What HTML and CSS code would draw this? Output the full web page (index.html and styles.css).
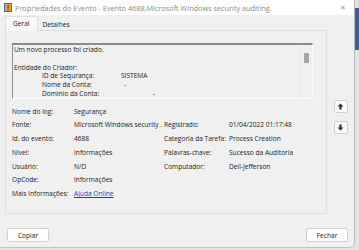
FILE: index.html
```html
<!DOCTYPE html>
<html lang="pt-BR">
<head>
  <meta charset="UTF-8" />
  <title>Propriedades do Evento</title>
  <link rel="stylesheet" href="styles.css">
</head>
<body>
  <div class="window">
    <div class="titlebar">
      <svg class="app-icon" width="8" height="9" viewBox="0 0 8 9">
        <rect x="0" y="0" width="8" height="9" fill="#3c6eb4"/>
        <rect x="1" y="1" width="6" height="7" fill="#e8a33a"/>
        <rect x="3.5" y="2" width="1.2" height="3.5" fill="#7a3b10"/>
        <rect x="3.5" y="6.2" width="1.2" height="1.2" fill="#7a3b10"/>
      </svg>
      <span class="title">Propriedades do Evento - Evento 4688,Microsoft Windows security auditing.</span>
      <span class="close">&#x2715;</span>
    </div>

    <div class="body">
      <div class="main">
        <div class="tabs">
          <div class="tab active">Geral</div>
          <div class="tab">Detalhes</div>
        </div>
        <div class="panel">
          <div class="desc">
            <div class="desc-text">
              <div>Um novo processo foi criado.</div>
              <div>&nbsp;</div>
              <div>Entidade do Criador:</div>
              <div class="kv"><span class="k">ID de Sequrança:</span><span>SISTEMA</span></div>
              <div class="kv"><span class="k">Nome da Conta:</span><span class="dash">-</span></div>
              <div class="kv"><span class="k">Domínio da Conta:</span><span class="dash2">-</span></div>
            </div>
            <div class="scroll"><div class="thumb"></div></div>
          </div>

          <div class="fields">
            <span>Nome do log:</span><span>Segurança</span><span></span><span></span>
            <span>Fonte:</span><span>Microsoft Windows security .</span><span>Registrado:</span><span>01/04/2022 01:17:48</span>
            <span>Id. do evento:</span><span>4688</span><span>Categoria da Tarefa:</span><span>Process Creation</span>
            <span>Nível:</span><span>Informações</span><span>Palavras-chave:</span><span>Sucesso da Auditoria</span>
            <span>Usuário:</span><span>N/D</span><span>Computador:</span><span>Dell-Jefferson</span>
            <span>OpCode:</span><span>Informações</span><span></span><span></span>
            <span>Mais Informações:</span><span><a href="#" class="link">Ajuda Online</a></span><span></span><span></span>
          </div>
        </div>
      </div>

      <div class="side">
        <button class="arrow">
          <svg width="7" height="7" viewBox="0 0 7 7"><path d="M3.5 0.5 L6.5 3.5 L4.6 3.5 L4.6 6.5 L2.4 6.5 L2.4 3.5 L0.5 3.5 Z" fill="#333"/></svg>
        </button>
        <button class="arrow">
          <svg width="7" height="7" viewBox="0 0 7 7"><path d="M3.5 6.5 L6.5 3.5 L4.6 3.5 L4.6 0.5 L2.4 0.5 L2.4 3.5 L0.5 3.5 Z" fill="#333"/></svg>
        </button>
      </div>
    </div>

    <div class="footer">
      <button class="btn">Copiar</button>
      <button class="btn">Fechar</button>
    </div>
  </div>
  <div class="edge"></div>
</body>
</html>
```

FILE: styles.css
```css
html, body {
  margin: 0;
  padding: 0;
  height: 250px;
  overflow: hidden;
  background: #e3e3e3;
}

body {
  font-family: 'Open Sans', 'Noto Sans', sans-serif;
  font-size: 6.6px;
  color: #1a1a1a;
  display: flex;
}

.window {
  width: 355px;
  height: 248px;
  background: #f0f0f0;
  border-right: 1px solid #b9b9b9;
  border-bottom: 1px solid #c4c4c4;
  border-bottom-right-radius: 5px;
  display: flex;
  flex-direction: column;
  box-sizing: border-box;
}

.edge {
  width: 4px;
  height: 42px;
  margin-top: 8px;
  background: #3d6196;
}

.titlebar {
  height: 16px;
  background: #fff;
  display: flex;
  align-items: center;
  padding-left: 4px;
  color: #8a8a8a;
  font-size: 7.3px;
}

.app-icon {
  margin-right: 3px;
}

.title {
  flex: 1;
  white-space: nowrap;
}

.close {
  color: #9a9a9a;
  font-size: 7px;
  margin-right: 8px;
}

.body {
  display: flex;
  flex: 1;
}

.main {
  width: 322px;
  margin-left: 5px;
  display: flex;
  flex-direction: column;
}

.tabs {
  display: flex;
  height: 14px;
  align-items: flex-end;
  margin-top: 1px;
}

.tab {
  height: 11px;
  line-height: 11px;
  padding: 0 5px;
  color: #222;
}

.tab.active {
  height: 14px;
  line-height: 14px;
  background: #f9f9f9;
  border: 1px solid #dedede;
  border-bottom: none;
  padding: 0 7px;
  margin-bottom: -1px;
  position: relative;
  z-index: 1;
}

.panel {
  height: 184px;
  border: 1px solid #dedede;
  box-sizing: border-box;
  padding: 12px 13px 0 6px;
}

.desc {
  height: 56px;
  border-top: 2px solid #8c8c8c;
  border-left: 1px solid #8c8c8c;
  border-right: 1px solid #fcfcfc;
  border-bottom: 1px solid #fcfcfc;
  display: flex;
  box-sizing: border-box;
}

.desc-text {
  flex: 1;
  padding: 1px 0 0 1px;
  line-height: 8.7px;
}

.kv {
  display: flex;
  padding-left: 28px;
}

.kv .k {
  width: 79px;
}

.dash {
  padding-left: 3px;
}

.dash2 {
  padding-left: 32px;
}

.scroll {
  width: 11px;
  border-left: 1px solid #e6e6e6;
  padding-top: 8px;
  display: flex;
  justify-content: center;
}

.thumb {
  width: 5px;
  height: 10px;
  background: #a6a6a6;
}

.fields {
  display: grid;
  grid-template-columns: 62px 90px 65px 1fr;
  grid-auto-rows: 13.8px;
  align-items: center;
  margin-top: 5px;
  white-space: nowrap;
}

.link {
  color: #0645d8;
  text-decoration: underline;
}

.side {
  flex: 1;
  display: flex;
  flex-direction: column;
  align-items: center;
  padding-top: 85px;
  gap: 8px;
}

.arrow {
  width: 14px;
  height: 13px;
  padding: 0;
  border: 1px solid #d0d0d0;
  border-radius: 2px;
  background: #fbfbfb;
  display: flex;
  align-items: center;
  justify-content: center;
}

.footer {
  height: 34px;
  display: flex;
  justify-content: space-between;
  align-items: flex-start;
  padding: 14px 6px 0 7px;
  box-sizing: border-box;
}

.btn {
  width: 42px;
  height: 14px;
  padding: 0;
  font-family: 'Open Sans', 'Noto Sans', sans-serif;
  font-size: 6.6px;
  color: #1a1a1a;
  background: #fdfdfd;
  border: 1px solid #d0d0d0;
  border-radius: 2px;
}
```
